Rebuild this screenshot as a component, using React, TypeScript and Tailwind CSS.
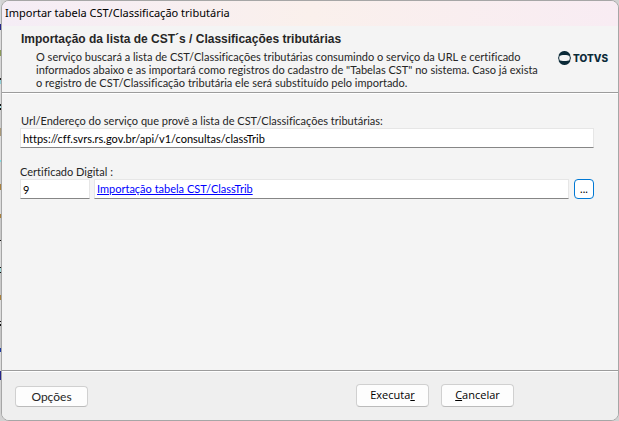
import { useState } from "react";

// strip of the window behind the dialog: height and colour of each piece
const strip = [
  "h-[24px] bg-[#d6d8da]",
  "h-[6px] bg-[#26268a]",
  "h-[20px] bg-[#dcdcdc]",
  "h-[6px] bg-[#8a9a58]",
  "h-[22px] bg-[#d6d6d6]",
  "h-[2px] bg-[#222222]",
  "h-[4px] bg-[#8fd0d8]",
  "h-[20px] bg-[#dcdcdc]",
  "h-[2px] bg-[#111111]",
  "h-[2px] bg-[#a8e4e8]",
  "h-[2px] bg-[#111111]",
  "h-[18px] bg-[#cdcdcd]",
  "h-[8px] bg-[#a89878]",
  "h-[24px] bg-[#dcdcdc]",
  "h-[2px] bg-[#7adfe6]",
  "h-[22px] bg-[#d0d0d0]",
  "h-[6px] bg-[#a8803c]",
  "h-[24px] bg-[#dcdcdc]",
  "h-[4px] bg-[#a8803c]",
  "h-[22px] bg-[#c8c8c8]",
  "h-[1px] bg-[#111111]",
  "h-[26px] bg-[#dcdcdc]",
  "h-[1px] bg-[#111111]",
  "h-[4px] bg-[#a0d8d8]",
  "h-[1px] bg-[#111111]",
  "h-[22px] bg-[#c8c8c8]",
  "h-[5px] bg-[#a8803c]",
  "h-[21px] bg-[#dcdcdc]",
  "h-[1px] bg-[#111111]",
  "h-[2px] bg-[#dcdcdc]",
  "h-[2px] bg-[#111111]",
  "h-[22px] bg-[#c4c4c4]",
  "h-[4px] bg-[#1e3aa0]",
  "h-[19px] bg-[#dcdcdc]",
  "h-[9px] bg-[#26268a]",
];

const field =
  "h-5 min-w-0 bg-white border border-[#e6e6e6] border-b-[#868686] px-0.5 text-[11px] text-black focus:outline-none";
const button =
  "bg-[#fdfdfd] border border-[#d0d0d0] border-b-[#bbbbbb] rounded hover:bg-[#e5f1fb]";

function Logo() {
  return (
    <div className="flex items-center gap-0.5 text-[#0b2a38]">
      <svg className="w-[13px] h-[14px] shrink-0" viewBox="0 0 26 28" fill="currentColor">
        <path d="M13 0c5.200 0 9.500 3 11.500 7.400.4 1 .2 2-.5 2.600C21.200 8.600 17.300 7.800 13 7.800S4.800 8.600 2 10c-.7-.6-.9-1.600-.5-2.600C3.500 3 7.800 0 13 0Z" />
        <path d="M13 28c5.200 0 9.500-3 11.500-7.400.4-1 .2-2-.5-2.600-2.800 1.400-6.700 2.200-11 2.200S4.800 19.400 2 18c-.7.6-.9 1.600-.5 2.600C3.500 25 7.800 28 13 28Z" />
        <path d="M2 9.500C.9 10.700.3 12.300.3 14S.9 17.300 2 18.500l2 .5c-1.100-1.400-1.700-3.100-1.700-5S2.900 10.400 4 9Z" />
        <path d="M24 9.500c1.100 1.200 1.700 2.800 1.700 4.500s-.6 3.300-1.700 4.500l-2 .5c1.100-1.400 1.700-3.100 1.700-5s-.6-3.600-1.700-5Z" />
      </svg>
      <span className="font-['Inter',sans-serif] text-[10px] leading-[14px] font-extrabold">TOTVS</span>
    </div>
  );
}

export default function App() {
  const [url, setUrl] = useState("https://cff.svrs.rs.gov.br/api/v1/consultas/classTrib");
  const [certId, setCertId] = useState("9");

  return (
    <div className="min-h-screen flex bg-[#d2d2d2] font-['Lato',Arial,sans-serif] text-[11px] text-[#262626] [font-variant-ligatures:none]">
      <div className="w-px shrink-0 overflow-hidden">
        {strip.map((piece, i) => (
          <div key={i} className={piece} />
        ))}
      </div>

      <main className="flex-1 min-w-0 flex flex-col overflow-hidden rounded-lg border border-[#a6a6a6] bg-[#f4f4f4]">
        <div className="h-[25px] flex items-center px-[3px] bg-linear-to-r from-[#f5edf6] via-[#faf0ec] to-[#f8ecf3] font-['Noto_Sans',sans-serif] text-black">
          <h1>Importar tabela CST/Classificação tributária</h1>
        </div>

        <header className="min-h-[67px] shrink-0 flex justify-between border-b border-[#9c9c9c] pl-[19px] pr-2.5">
          <div className="pt-1.5">
            <h2 className="font-['Liberation_Sans',Arial,sans-serif] text-xs font-bold leading-[14px]">
              Importação da lista de CST´s / Classificações tributárias
            </h2>
            <p className="max-w-[535px] pl-[15px] pt-1 leading-[13px]">
              O serviço buscará a lista de CST/Classificações tributárias consumindo o serviço da URL e certificado
              <br />
              informados abaixo e as importará como registros do cadastro de "Tabelas CST" no sistema. Caso já exista
              <br />
              o registro de CST/Classificação tributária ele será substituído pelo importado.
            </p>
          </div>
          <div className="pt-[25px]">
            <Logo />
          </div>
        </header>

        <section className="flex-1 border-t border-b border-t-white border-b-[#9c9c9c] pl-[18px] pr-6 pt-5">
          <label htmlFor="url" className="block pl-px leading-[14px]">
            Url/Endereço do serviço que provê a lista de CST/Classificações tributárias:
          </label>
          <input id="url" className={`${field} w-full block`} value={url} onChange={(e) => setUrl(e.target.value)} />

          <label htmlFor="cert" className="block mt-[17px] leading-[14px]">
            Certificado Digital :
          </label>
          <div className="flex items-center">
            <input
              id="cert"
              className={`${field} w-[70px]`}
              value={certId}
              onChange={(e) => setCertId(e.target.value)}
            />
            <div className={`${field} ml-1 flex-1 leading-[18px]`}>
              <a href="#" className="text-[#0000ff] underline">
                Importação tabela CST/ClassTrib
              </a>
            </div>
            <button
              type="button"
              aria-label="Buscar certificado"
              className="ml-[5px] w-5 h-5 rounded border border-[#0078d4] bg-white leading-4 text-black"
            >
              ...
            </button>
          </div>
        </section>

        <footer className="h-[49px] shrink-0 flex border-t border-white bg-[#efefef] pl-[13px] pr-[104px]">
          <button type="button" className={`${button} mt-3.5 mr-auto w-[73px] h-[21px] text-xs`}>
            Opções
          </button>
          <div className="flex gap-3 pt-3 font-['Open_Sans',sans-serif] text-black">
            <button type="button" className={`${button} w-[73px] h-[23px]`}>
              Executa<u>r</u>
            </button>
            <button type="button" className={`${button} w-[73px] h-[23px]`}>
              <u>C</u>ancelar
            </button>
          </div>
        </footer>
      </main>
    </div>
  );
}
